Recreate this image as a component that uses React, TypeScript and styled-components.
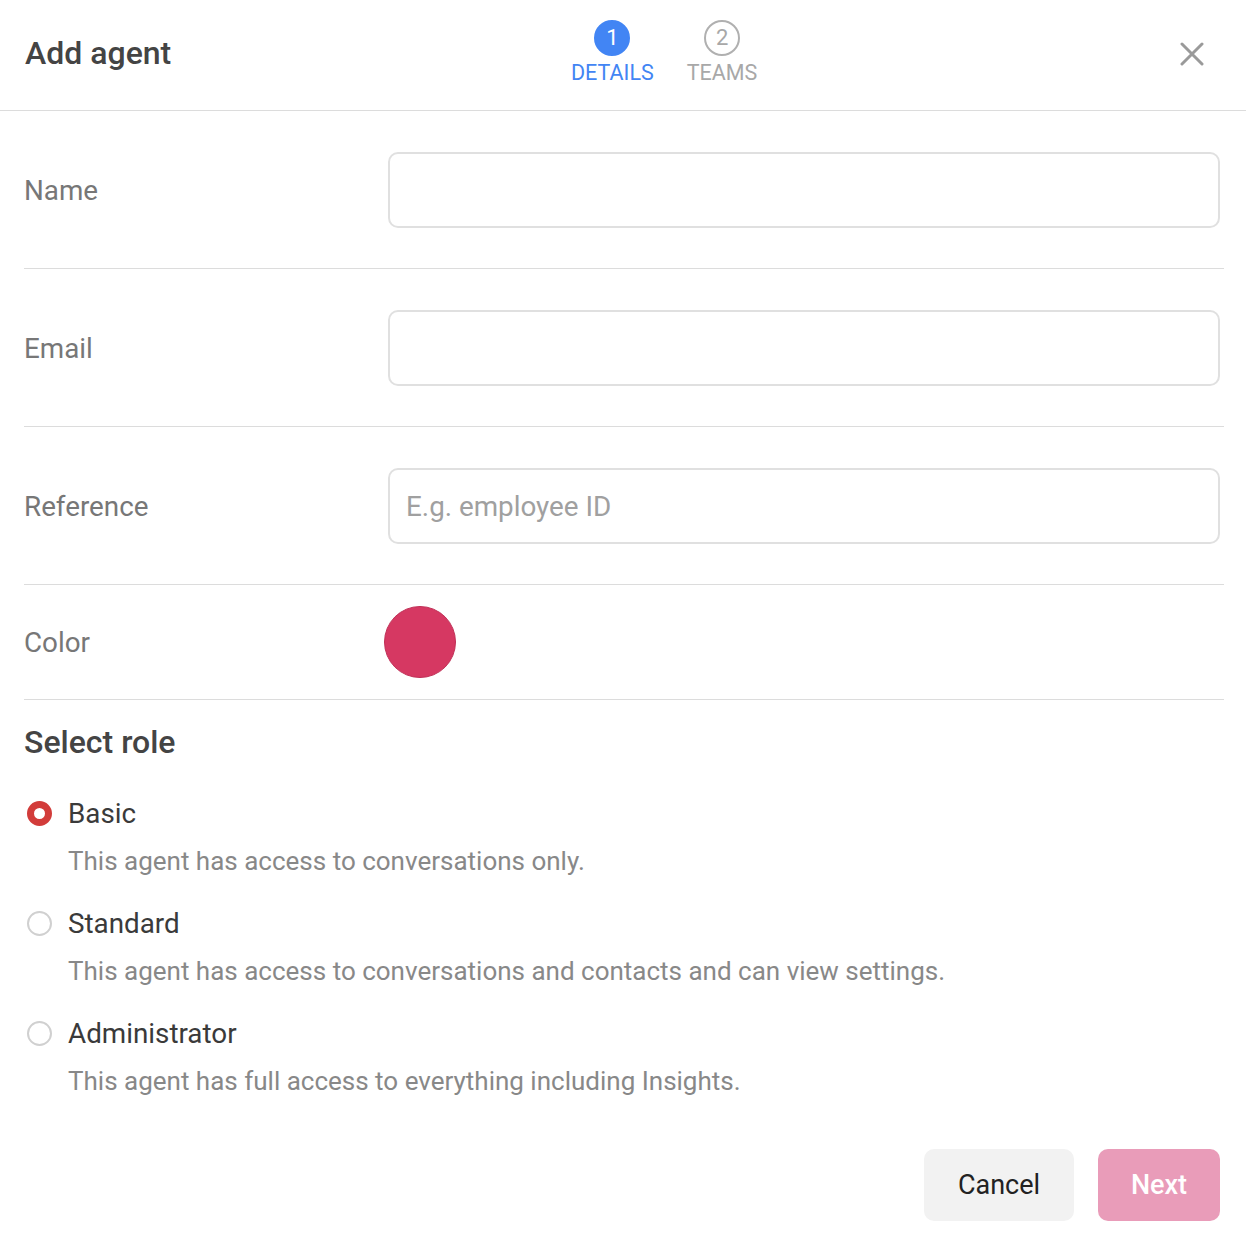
import styled, { createGlobalStyle } from "styled-components";

const GlobalStyle = createGlobalStyle`
  html, body {
    margin: 0;
    padding: 0;
    background: #ffffff;
    font-family: Roboto, "Noto Sans", Arial, sans-serif;
  }
  * { box-sizing: border-box; }
`;

const Dialog = styled.div`
  width: 1246px;
  min-height: 1244px;
  background: #fff;
  display: flex;
  flex-direction: column;
`;

const Header = styled.header`
  height: 111px;
  border-bottom: 1px solid #dcdcdc;
  display: grid;
  grid-template-columns: 546px auto 1fr;
  align-items: center;
  padding: 0 24px 0 25px;
`;

const Title = styled.h1`
  margin: 0;
  font-size: 32px;
  line-height: 40px;
  font-weight: 500;
  color: #444;
  padding-bottom: 4px;
`;

const Stepper = styled.div`
  display: flex;
  gap: 33px;
  align-self: start;
  padding-top: 20px;
`;

const Step = styled.div<{ active?: boolean }>`
  display: flex;
  flex-direction: column;
  align-items: center;
  color: ${p => (p.active ? "#4285f4" : "#a8a8a8")};
  font-size: 21.5px;
  line-height: 26px;
`;

const StepDot = styled.span<{ active?: boolean }>`
  width: 36px;
  height: 36px;
  border-radius: 50%;
  display: flex;
  align-items: center;
  justify-content: center;
  font-size: 22px;
  margin-bottom: 4px;
  background: ${p => (p.active ? "#4285f4" : "transparent")};
  color: ${p => (p.active ? "#fff" : "#a8a8a8")};
  border: 2px solid ${p => (p.active ? "#4285f4" : "#b0b0b0")};
`;

const Close = styled.button`
  justify-self: end;
  background: none;
  border: 0;
  padding: 0;
  margin: 0 14px 2px 0;
  width: 32px;
  height: 32px;
  display: flex;
  align-items: center;
  justify-content: center;
  cursor: pointer;
`;

const Body = styled.div`
  padding: 0 22px 0 24px;
  display: flex;
  flex-direction: column;
`;

const Row = styled.div<{ compact?: boolean }>`
  display: grid;
  grid-template-columns: 364px 1fr;
  align-items: center;
  padding: ${p => (p.compact ? "21px 0" : "41px 0 40px")};
  border-bottom: 1px solid #dcdcdc;
`;

const Label = styled.label`
  font-size: 27.8px;
  color: #777;
`;

const Input = styled.input`
  height: 76px;
  width: 832px;
  border: 2px solid #e0e0e0;
  border-radius: 10px;
  padding: 0 16px;
  font-family: inherit;
  font-size: 27.8px;
  color: #333;
  outline: none;
  &::placeholder { color: #a0a0a0; }
`;

const Swatch = styled.span`
  width: 72px;
  height: 72px;
  border-radius: 50%;
  background: #d63862;
  border: 1px solid #c02f56;
  margin-left: -4px;
`;

const SectionTitle = styled.h2`
  margin: 23px 0 37px;
  font-size: 32px;
  line-height: 38px;
  font-weight: 500;
  color: #444;
`;

const Options = styled.div`
  display: flex;
  flex-direction: column;
  gap: 32px;
`;

const Option = styled.label`
  display: grid;
  grid-template-columns: 44px 1fr;
  row-gap: 16px;
  align-items: center;
  cursor: pointer;
`;

const Radio = styled.span<{ checked?: boolean }>`
  width: 25px;
  height: 25px;
  border-radius: 50%;
  margin-left: 3px;
  margin-top: -2px;
  border: ${p => (p.checked ? "7px solid #d23c3a" : "2px solid #d0d0d0")};
  background: #fff;
`;

const OptionName = styled.span`
  font-size: 27.8px;
  line-height: 32px;
  color: #3a3a3a;
`;

const OptionDesc = styled.span`
  grid-column: 2;
  font-size: 26px;
  line-height: 30px;
  color: #888;
`;

const Footer = styled.footer`
  display: flex;
  justify-content: flex-end;
  gap: 24px;
  padding: 53px 26px 0 0;
`;

const Button = styled.button<{ primary?: boolean }>`
  height: 72px;
  border: 0;
  border-radius: 10px;
  font-family: inherit;
  font-size: 27px;
  padding: 0;
  width: ${p => (p.primary ? "122px" : "150px")};
  font-weight: ${p => (p.primary ? 500 : 400)};
  background: ${p => (p.primary ? "#e99cb9" : "#f2f2f2")};
  color: ${p => (p.primary ? "#fff" : "#222")};
  cursor: pointer;
`;

const roles = [
  { name: "Basic", desc: "This agent has access to conversations only.", checked: true },
  { name: "Standard", desc: "This agent has access to conversations and contacts and can view settings." },
  { name: "Administrator", desc: "This agent has full access to everything including Insights." },
];

export default function App() {
  return (
    <Dialog>
      <GlobalStyle />
      <Header>
        <Title>Add agent</Title>
        <Stepper>
          <Step active>
            <StepDot active>1</StepDot>
            DETAILS
          </Step>
          <Step>
            <StepDot>2</StepDot>
            TEAMS
          </Step>
        </Stepper>
        <Close aria-label="Close">
          <svg width="24" height="24" viewBox="0 0 24 24">
            <path d="M2 2 L22 22 M22 2 L2 22" stroke="#9a9a9a" strokeWidth="3" strokeLinecap="round" />
          </svg>
        </Close>
      </Header>
      <Body>
        <Row>
          <Label>Name</Label>
          <Input />
        </Row>
        <Row>
          <Label>Email</Label>
          <Input />
        </Row>
        <Row>
          <Label>Reference</Label>
          <Input placeholder="E.g. employee ID" />
        </Row>
        <Row compact>
          <Label>Color</Label>
          <Swatch />
        </Row>
        <SectionTitle>Select role</SectionTitle>
        <Options>
          {roles.map(r => (
            <Option key={r.name}>
              <Radio checked={r.checked} />
              <OptionName>{r.name}</OptionName>
              <OptionDesc>{r.desc}</OptionDesc>
            </Option>
          ))}
        </Options>
      </Body>
      <Footer>
        <Button>Cancel</Button>
        <Button primary>Next</Button>
      </Footer>
    </Dialog>
  );
}
